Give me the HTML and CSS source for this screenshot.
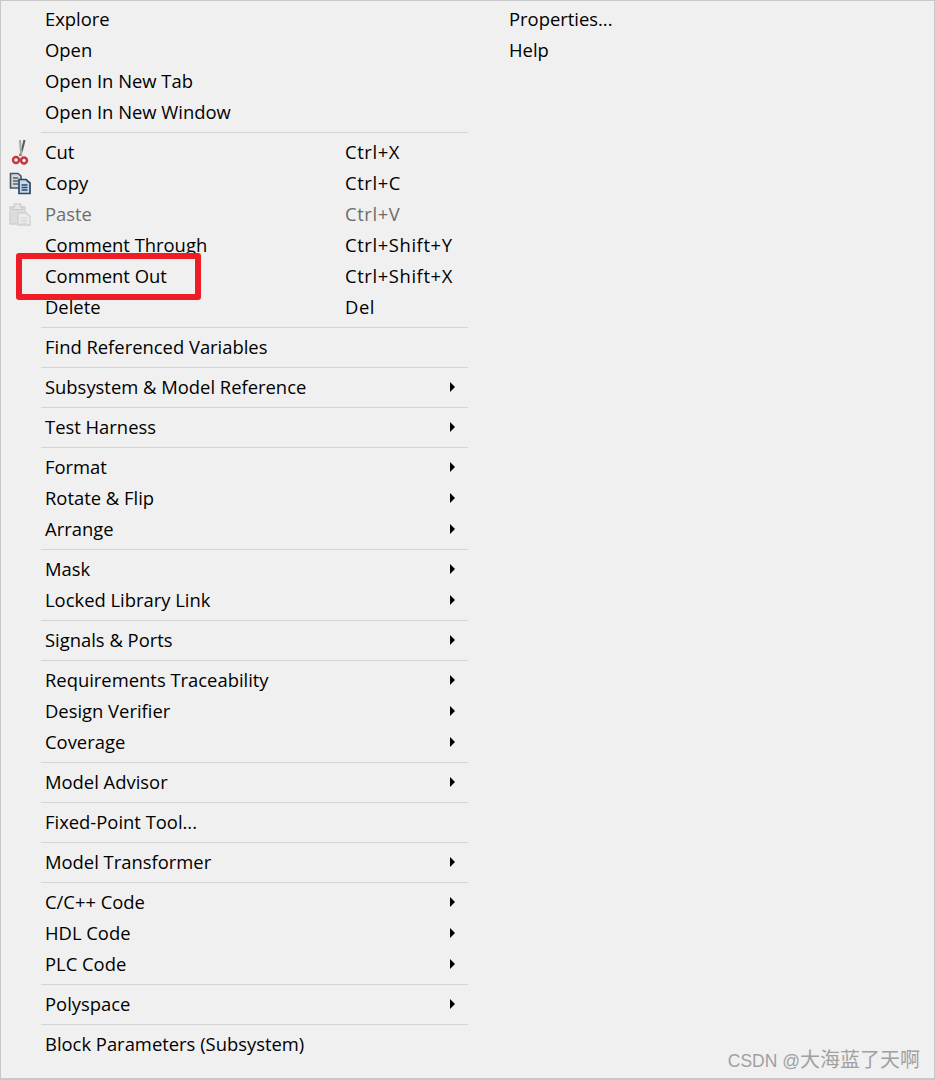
FILE: index.html
```html
<!DOCTYPE html>
<html lang="en">
<head>
    <meta charset="UTF-8">
    <meta name="viewport" content="width=device-width, initial-scale=1.0">
    <title>Block context menu</title>
    <link rel="stylesheet" href="styles.css">
</head>
<body>
    <div class="menu">
        <div class="menu-col">
            <div class="menu-group">
                <div class="menu-item"><span class="menu-icon"></span><span class="menu-label">Explore</span></div>
                <div class="menu-item"><span class="menu-icon"></span><span class="menu-label">Open</span></div>
                <div class="menu-item"><span class="menu-icon"></span><span class="menu-label">Open In New Tab</span></div>
                <div class="menu-item"><span class="menu-icon"></span><span class="menu-label">Open In New Window</span></div>
            </div>
            <div class="menu-group">
                <div class="menu-item">
                    <span class="menu-icon">
                        <svg width="20" height="26" viewBox="0 0 20 26">
                            <path d="M14.5 1 L12.5 9 L10 17" stroke="#5f5f5f" stroke-width="2.2" fill="none"/>
                            <path d="M10 1 L10.5 9 L11.5 17" stroke="#a8a8a8" stroke-width="2" fill="none"/>
                            <circle cx="6" cy="21" r="3" stroke="#bf3a40" stroke-width="2.4" fill="none"/>
                            <circle cx="14" cy="21.5" r="3" stroke="#bf3a40" stroke-width="2.4" fill="none"/>
                        </svg>
                    </span>
                    <span class="menu-label">Cut</span><span class="menu-key">Ctrl+X</span>
                </div>
                <div class="menu-item">
                    <span class="menu-icon">
                        <svg width="24" height="24" viewBox="0 0 24 24">
                            <path d="M2.5 2.5 H10 L13 5 V17 H2.5 Z" fill="#d4d7dc" stroke="#4a5562" stroke-width="1.6"/>
                            <path d="M5 7 H10 M5 10 H10 M5 13 H10" stroke="#566270" stroke-width="1.4"/>
                            <path d="M11 8.5 H18 L22 12 V22.5 H11 Z" fill="#c9d9ea" stroke="#2a4866" stroke-width="1.7"/>
                            <path d="M13.5 14 H19.5 M13.5 16.5 H19.5 M13.5 19 H19.5" stroke="#264a70" stroke-width="1.5"/>
                        </svg>
                    </span>
                    <span class="menu-label">Copy</span><span class="menu-key">Ctrl+C</span>
                </div>
                <div class="menu-item is-disabled">
                    <span class="menu-icon">
                        <svg width="24" height="24" viewBox="0 0 24 24">
                            <path d="M2 5 H17 V22 H2 Z" fill="#dcdcdc" stroke="#d0d0d0" stroke-width="1.4"/>
                            <path d="M6.5 5 V2 H12.5 V5 H14.5 V7.5 H4.5 V5 Z" fill="#e6e6e6" stroke="#c8c8c8" stroke-width="1.2"/>
                            <path d="M10 11 H18 L22 14.5 V23 H10 Z" fill="#ececec" stroke="#cecece" stroke-width="1.3"/>
                            <path d="M12.5 16 H19 M12.5 18.5 H19 M12.5 21 H19" stroke="#cfcfcf" stroke-width="1.1"/>
                        </svg>
                    </span>
                    <span class="menu-label">Paste</span><span class="menu-key">Ctrl+V</span>
                </div>
                <div class="menu-item"><span class="menu-icon"></span><span class="menu-label">Comment Through</span><span class="menu-key">Ctrl+Shift+Y</span></div>
                <div class="menu-item"><span class="menu-icon"></span><span class="menu-label">Comment Out</span><span class="menu-key">Ctrl+Shift+X</span></div>
                <div class="menu-item"><span class="menu-icon"></span><span class="menu-label">Delete</span><span class="menu-key">Del</span></div>
            </div>
            <div class="menu-group">
                <div class="menu-item"><span class="menu-icon"></span><span class="menu-label">Find Referenced Variables</span></div>
            </div>
            <div class="menu-group">
                <div class="menu-item has-sub"><span class="menu-icon"></span><span class="menu-label">Subsystem &amp; Model Reference</span></div>
            </div>
            <div class="menu-group">
                <div class="menu-item has-sub"><span class="menu-icon"></span><span class="menu-label">Test Harness</span></div>
            </div>
            <div class="menu-group">
                <div class="menu-item has-sub"><span class="menu-icon"></span><span class="menu-label">Format</span></div>
                <div class="menu-item has-sub"><span class="menu-icon"></span><span class="menu-label">Rotate &amp; Flip</span></div>
                <div class="menu-item has-sub"><span class="menu-icon"></span><span class="menu-label">Arrange</span></div>
            </div>
            <div class="menu-group">
                <div class="menu-item has-sub"><span class="menu-icon"></span><span class="menu-label">Mask</span></div>
                <div class="menu-item has-sub"><span class="menu-icon"></span><span class="menu-label">Locked Library Link</span></div>
            </div>
            <div class="menu-group">
                <div class="menu-item has-sub"><span class="menu-icon"></span><span class="menu-label">Signals &amp; Ports</span></div>
            </div>
            <div class="menu-group">
                <div class="menu-item has-sub"><span class="menu-icon"></span><span class="menu-label">Requirements Traceability</span></div>
                <div class="menu-item has-sub"><span class="menu-icon"></span><span class="menu-label">Design Verifier</span></div>
                <div class="menu-item has-sub"><span class="menu-icon"></span><span class="menu-label">Coverage</span></div>
            </div>
            <div class="menu-group">
                <div class="menu-item has-sub"><span class="menu-icon"></span><span class="menu-label">Model Advisor</span></div>
            </div>
            <div class="menu-group">
                <div class="menu-item"><span class="menu-icon"></span><span class="menu-label">Fixed-Point Tool...</span></div>
            </div>
            <div class="menu-group">
                <div class="menu-item has-sub"><span class="menu-icon"></span><span class="menu-label">Model Transformer</span></div>
            </div>
            <div class="menu-group">
                <div class="menu-item has-sub"><span class="menu-icon"></span><span class="menu-label">C/C++ Code</span></div>
                <div class="menu-item has-sub"><span class="menu-icon"></span><span class="menu-label">HDL Code</span></div>
                <div class="menu-item has-sub"><span class="menu-icon"></span><span class="menu-label">PLC Code</span></div>
            </div>
            <div class="menu-group">
                <div class="menu-item has-sub"><span class="menu-icon"></span><span class="menu-label">Polyspace</span></div>
            </div>
            <div class="menu-group">
                <div class="menu-item"><span class="menu-icon"></span><span class="menu-label">Block Parameters (Subsystem)</span></div>
            </div>
        </div>
        <div class="menu-col-side">
            <div class="menu-item"><span class="menu-label">Properties...</span></div>
            <div class="menu-item"><span class="menu-label">Help</span></div>
        </div>
    </div>
    <div class="highlight-box"></div>
    <div class="watermark"><span class="watermark-latin">CSDN @</span>大海蓝了天啊</div>
</body>
</html>
```

FILE: styles.css
```css
html, body {
    margin: 0;
    padding: 0;
}
body {
    position: relative;
    width: 935px;
    height: 1080px;
    overflow: hidden;
    box-sizing: border-box;
    background-color: #f0f0f0;
    border: 1px solid #c8c8c8;
    border-bottom-width: 2px;
    font-family: "Open Sans", "Noto Sans", Arial, sans-serif;
    font-size: 18.4px;
    color: #000;
}
.menu {
    display: flex;
    padding-top: 3px;
}
.menu-col {
    width: 467px;
    flex: none;
}
.menu-col-side {
    padding-left: 41px;
}
.menu-group {
    padding: 0 0 4px;
    margin-bottom: 4px;
    margin-left: 40px;
    border-bottom: 1px solid #d4d4d4;
}
.menu-group:last-child {
    border-bottom: none;
}
.menu-item {
    display: flex;
    align-items: center;
    position: relative;
    box-sizing: border-box;
    height: 31px;
    padding-bottom: 2px;
    white-space: nowrap;
}
.menu-group .menu-item {
    margin-left: -40px;
}
.menu-icon {
    width: 44px;
    flex: none;
    display: flex;
    justify-content: center;
    padding-right: 6px;
    box-sizing: border-box;
    height: 26px;
    align-items: center;
}
.menu-label {
    width: 300px;
    flex: none;
}
.menu-key {
    flex: none;
    letter-spacing: 0.6px;
}
.is-disabled {
    color: #6d6d6d;
}
.has-sub::after {
    content: "";
    position: absolute;
    left: 449px;
    top: 10px;
    border-left: 5px solid #000;
    border-top: 5px solid transparent;
    border-bottom: 5px solid transparent;
}
.highlight-box {
    position: absolute;
    left: 15px;
    top: 252px;
    width: 173px;
    height: 35px;
    border: 6px solid #ee1c25;
    border-radius: 3px;
}
.watermark {
    position: absolute;
    right: 14px;
    bottom: 5px;
    font-family: "Liberation Sans", "Noto Sans CJK SC", sans-serif;
    font-size: 20px;
    color: #a0a0a0;
}
.watermark-latin {
    font-size: 17.5px;
}
```
